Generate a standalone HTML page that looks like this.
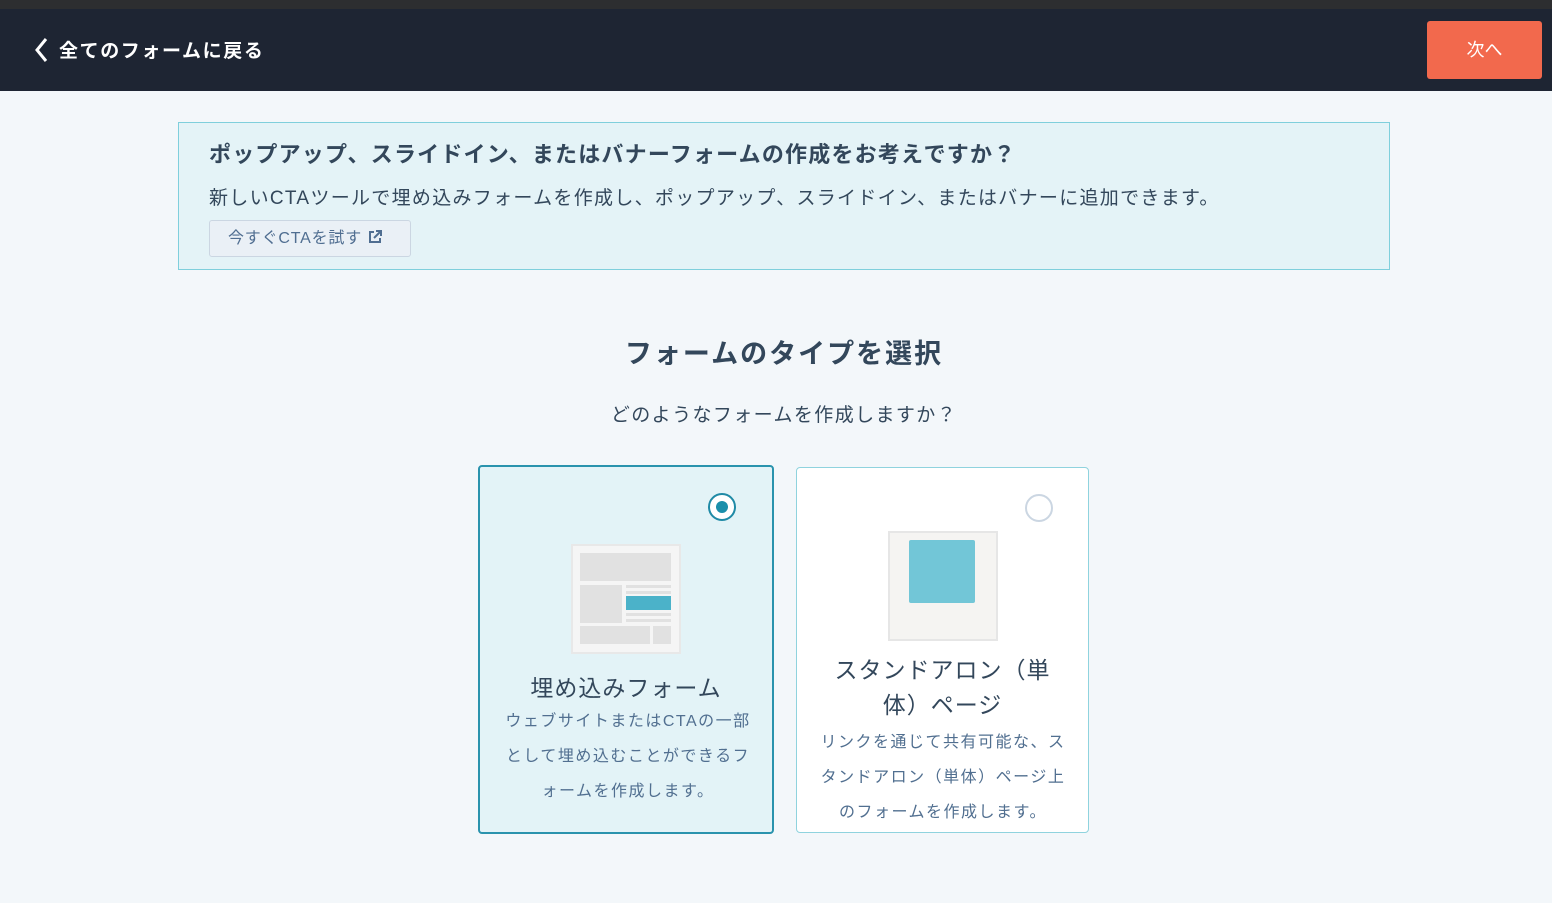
<!DOCTYPE html>
<html><head><meta charset="utf-8"><style>
*{margin:0;padding:0;box-sizing:border-box}
body{width:1552px;height:903px;background:#f3f7fa;font-family:"Liberation Sans","Noto Sans CJK JP",sans-serif;color:#33475b;position:relative;overflow:hidden}
.top{position:absolute;left:0;top:0;width:1552px;height:9px;background:#2d2e30}
.bar{position:absolute;left:0;top:9px;width:1552px;height:82px;background:#1e2533}
.back{position:absolute;left:33px;top:36px;color:#fff;font-size:19px;font-weight:bold;display:flex;align-items:center;letter-spacing:1.6px}
.next{position:absolute;left:1427px;top:21px;width:115px;height:58px;background:#f2694d;color:#fff;font-size:18px;border-radius:3px;text-align:center;line-height:58px}
.banner{position:absolute;left:178px;top:122px;width:1212px;height:148px;background:#e4f3f7;border:1px solid #7fcfdc}
.banner h2{position:absolute;left:30px;top:14px;font-size:22px;font-weight:bold;color:#33475b;letter-spacing:1.2px;white-space:nowrap}
.banner p{position:absolute;left:30px;top:60px;font-size:19px;color:#33475b;letter-spacing:1.3px;white-space:nowrap}
.btn{position:absolute;left:30px;top:97px;width:202px;height:37px;background:#eaf0f6;border:1px solid #cbd6e2;border-radius:3px;font-size:16px;color:#506e91;line-height:35px;padding-left:18px;letter-spacing:0.8px;white-space:nowrap}
.title{position:absolute;left:0;width:1568px;top:332px;text-align:center;font-size:27px;font-weight:bold;color:#33475b;letter-spacing:2px}
.sub{position:absolute;left:0;width:1568px;top:400px;text-align:center;font-size:19px;letter-spacing:1.4px}
.card{position:absolute;border-radius:4px;text-align:center}
.c1{left:478px;top:465px;width:296px;height:369px;background:#e3f3f7;border:2px solid #2a93ad}
.c2{left:796px;top:467px;width:293px;height:366px;background:#fff;border:1px solid #8fd3de}
.radio{position:absolute;width:28px;height:28px;border-radius:50%}
.ct{font-size:23px;color:#33475b;position:absolute;left:0;width:100%;letter-spacing:1px}
.cd{font-size:16px;color:#516f90;position:absolute;line-height:35px;letter-spacing:1.5px}
</style></head><body>
<div class="top"></div>
<div class="bar"></div>
<div class="back"><svg width="18" height="26" viewBox="0 0 18 26"><path d="M13 2 L4 13 L13 24" stroke="#fff" stroke-width="3" fill="none"/></svg><span style="margin-left:8px">全てのフォームに戻る</span></div>
<div class="next">次へ</div>
<div class="banner">
<h2>ポップアップ、スライドイン、またはバナーフォームの作成をお考えですか？</h2>
<p>新しいCTAツールで埋め込みフォームを作成し、ポップアップ、スライドイン、またはバナーに追加できます。</p>
<div class="btn">今すぐCTAを試す <svg width="16" height="16" viewBox="0 0 16 16" style="vertical-align:-2px"><path d="M7 3H3v10h10V9" stroke="#506e91" stroke-width="2" fill="none"/><path d="M9 2h5v5M14 2L7 9" stroke="#506e91" stroke-width="2" fill="none"/></svg></div>
</div>
<div class="title">フォームのタイプを選択</div>
<div class="sub">どのようなフォームを作成しますか？</div>
<div class="card c1">
<div class="radio" style="left:228px;top:26px;border:2px solid #1f8aa6;background:#fff"><div style="position:absolute;left:6px;top:6px;width:12px;height:12px;border-radius:50%;background:#1a8fab"></div></div>
<svg style="position:absolute;left:91px;top:77px" width="110" height="110" viewBox="0 0 110 110"><rect x="1" y="1" width="108" height="108" fill="#f5f5f5" stroke="#e8e8e8" stroke-width="2"/><rect x="9" y="9" width="91" height="28" fill="#e1e1e1"/><rect x="9" y="41" width="42" height="38" fill="#e1e1e1"/><rect x="55" y="41" width="45" height="3" fill="#e1e1e1"/><rect x="55" y="47" width="45" height="3" fill="#e1e1e1"/><rect x="55" y="52" width="45" height="14" fill="#4bb2c9"/><rect x="55" y="69" width="45" height="3" fill="#e1e1e1"/><rect x="55" y="75" width="45" height="3" fill="#e1e1e1"/><rect x="9" y="82" width="70" height="18" fill="#e1e1e1"/><rect x="82" y="82" width="18" height="18" fill="#e1e1e1"/></svg>
<div class="ct" style="top:202px">埋め込みフォーム</div>
<div class="cd" style="left:23px;width:250px;top:237px">ウェブサイトまたはCTAの一部として埋め込むことができるフォームを作成します。</div>
</div>
<div class="card c2">
<div class="radio" style="left:228px;top:26px;border:2px solid #cbd6e2;background:#fff"></div>
<svg style="position:absolute;left:91px;top:63px" width="110" height="110" viewBox="0 0 110 110"><rect x="1" y="1" width="108" height="108" fill="#f5f4f2" stroke="#e6e6e6" stroke-width="2"/><rect x="21" y="9" width="66" height="63" rx="2" fill="#72c6d7"/></svg>
<div class="ct" style="top:185px;line-height:35px;padding:0 30px">スタンドアロン（単体）ページ</div>
<div class="cd" style="left:21px;width:250px;top:257px">リンクを通じて共有可能な、スタンドアロン（単体）ページ上のフォームを作成します。</div>
</div>
</body></html>
